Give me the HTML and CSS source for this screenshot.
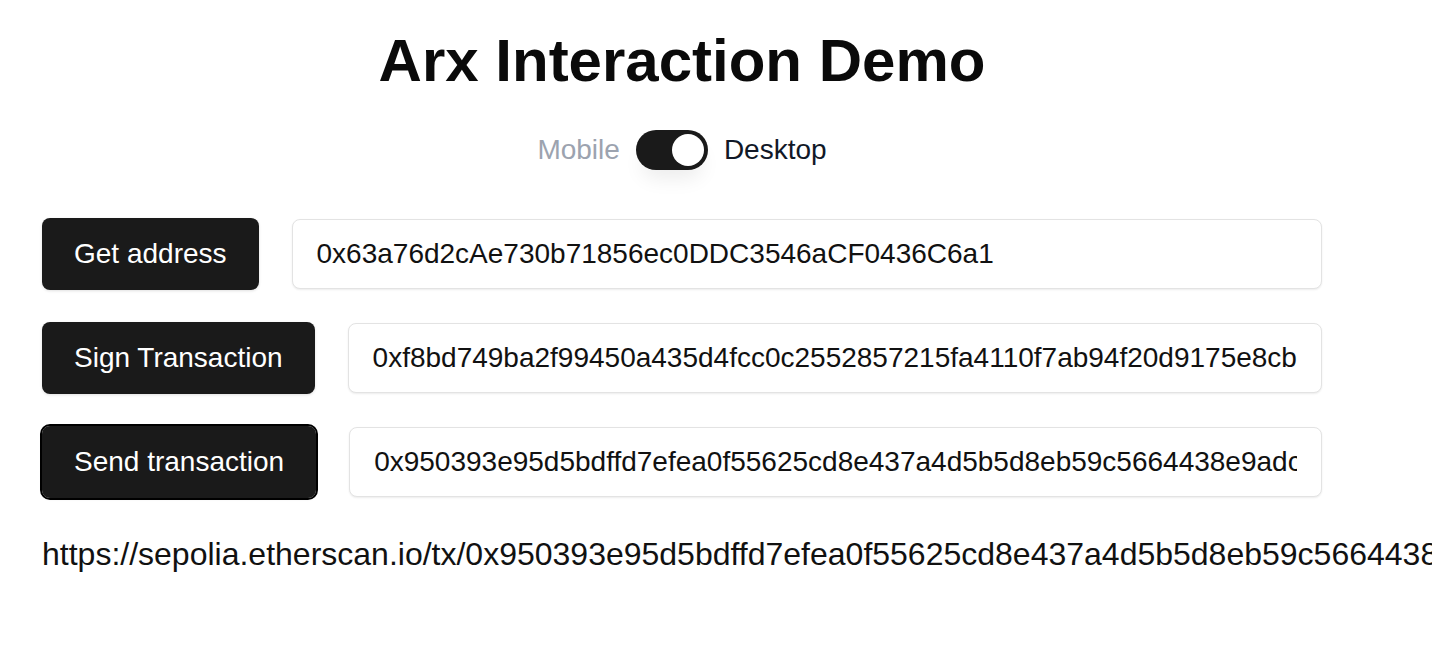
FILE: index.html
```html
<!DOCTYPE html>
<html lang="en">
<head>
<meta charset="utf-8">
<title>Arx Interaction Demo</title>
<link rel="stylesheet" href="styles.css">
</head>
<body>
<main class="container">
  <h1 class="title">Arx Interaction Demo</h1>
  <div class="mode-toggle">
    <span class="mode-label mode-off">Mobile</span>
    <span class="switch"><span class="knob"></span></span>
    <span class="mode-label mode-on">Desktop</span>
  </div>
  <div class="actions">
    <div class="action-row">
      <button class="btn">Get address</button>
      <input class="field" readonly value="0x63a76d2cAe730b71856ec0DDC3546aCF0436C6a1">
    </div>
    <div class="action-row">
      <button class="btn">Sign Transaction</button>
      <input class="field" readonly value="0xf8bd749ba2f99450a435d4fcc0c2552857215fa4110f7ab94f20d9175e8cb80a0e3c2b6f4d91a87c3e5f02b1d4c6a9e8f7b3d2c1a0958e4f3b2a1c0d9e8f7a6b5c4d3e2f1a0b9c8d7e6f5a4b3c2d1e0f9a8b7c6d5e4f3a2b1">
    </div>
    <div class="action-row">
      <button class="btn btn-focus">Send transaction</button>
      <input class="field" readonly value="0x950393e95d5bdffd7efea0f55625cd8e437a4d5b5d8eb59c5664438e9adc3f71">
    </div>
  </div>
  <p class="tx-link">https://sepolia.etherscan.io/tx/0x950393e95d5bdffd7efea0f55625cd8e437a4d5b5d8eb59c5664438e9adc3f71</p>
</main>
</body>
</html>
```

FILE: styles.css
```css
html, body {
  margin: 0;
  padding: 0;
  background: #ffffff;
  overflow: hidden;
}

body {
  font-family: "Liberation Sans", Arial, sans-serif;
  color: #111111;
}

.container {
  width: 1280px;
  margin-left: 42px;
  display: flex;
  flex-direction: column;
}

.title {
  margin: 26px 0 0;
  font-size: 60px;
  line-height: 70px;
  font-weight: 700;
  text-align: center;
  color: #0a0a0a;
}

.mode-toggle {
  margin-top: 34px;
  height: 40px;
  display: flex;
  align-items: center;
  justify-content: center;
  gap: 16px;
  font-size: 28px;
}

.mode-off {
  color: #9ca3af;
}

.mode-on {
  color: #111827;
}

.switch {
  width: 72px;
  height: 40px;
  border-radius: 20px;
  background: #1a1a1a;
  display: flex;
  align-items: center;
  justify-content: flex-end;
  padding: 0 4px;
  box-sizing: border-box;
  box-shadow: 0 14px 20px -6px rgba(0, 0, 0, 0.08);
}

.knob {
  width: 32px;
  height: 32px;
  border-radius: 50%;
  background: #ffffff;
}

.actions {
  margin-top: 48px;
  display: flex;
  flex-direction: column;
  gap: 32px;
}

.action-row {
  display: flex;
  align-items: center;
  gap: 33px;
  height: 72px;
}

.btn {
  flex: none;
  height: 72px;
  padding: 0 32px;
  border: none;
  border-radius: 8px;
  background: #1a1a1a;
  color: #ffffff;
  font-family: "Liberation Sans", Arial, sans-serif;
  font-size: 28px;
  line-height: 32px;
  box-shadow: 0 1px 3px rgba(0, 0, 0, 0.12);
}

.btn-focus {
  outline: 2px solid #000000;
  outline-offset: 0;
}

.field {
  flex: 1;
  min-width: 0;
  height: 70px;
  box-sizing: border-box;
  padding: 0 24px;
  border: 1px solid #e3e3e3;
  border-radius: 8px;
  background: #ffffff;
  color: #111111;
  font-family: "Liberation Sans", Arial, sans-serif;
  font-size: 28px;
  box-shadow: 0 1px 2px rgba(0, 0, 0, 0.08);
  outline: none;
}

.tx-link {
  margin: 38px 0 0;
  font-size: 32px;
  line-height: 37px;
  white-space: nowrap;
  color: #111111;
}
```
